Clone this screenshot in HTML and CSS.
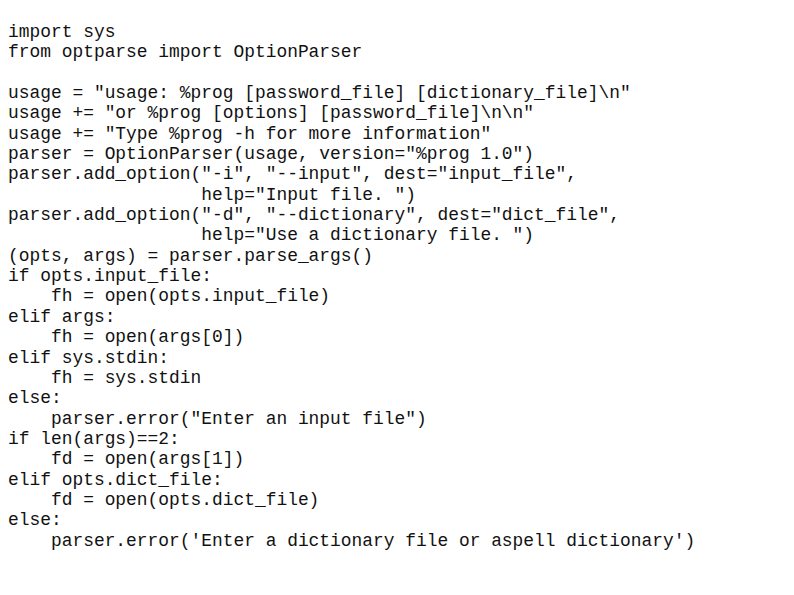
FILE: index.html
```html
<!DOCTYPE html>
<html>
<head>
<meta charset="utf-8">
<link rel="stylesheet" href="styles.css">
</head>
<body>
<pre class="code">import sys
from optparse import OptionParser

usage = "usage: %prog [password_file] [dictionary_file]\n"
usage += "or %prog [options] [password_file]\n\n"
usage += "Type %prog -h for more information"
parser = OptionParser(usage, version="%prog 1.0")
parser.add_option("-i", "--input", dest="input_file",
                  help="Input file. ")
parser.add_option("-d", "--dictionary", dest="dict_file",
                  help="Use a dictionary file. ")
(opts, args) = parser.parse_args()
if opts.input_file:
    fh = open(opts.input_file)
elif args:
    fh = open(args[0])
elif sys.stdin:
    fh = sys.stdin
else:
    parser.error("Enter an input file")
if len(args)==2:
    fd = open(args[1])
elif opts.dict_file:
    fd = open(opts.dict_file)
else:
    parser.error('Enter a dictionary file or aspell dictionary')</pre>
</body>
</html>
```
FILE: styles.css
```css
html, body {
  margin: 0;
  background: #ffffff;
}
body {
  padding: 22px 0 0 8px;
}
.code {
  margin: 0;
  font-family: "Liberation Mono", "Courier New", monospace;
  font-size: 17.9px;
  line-height: 20.35px;
  color: #111111;
}
```
